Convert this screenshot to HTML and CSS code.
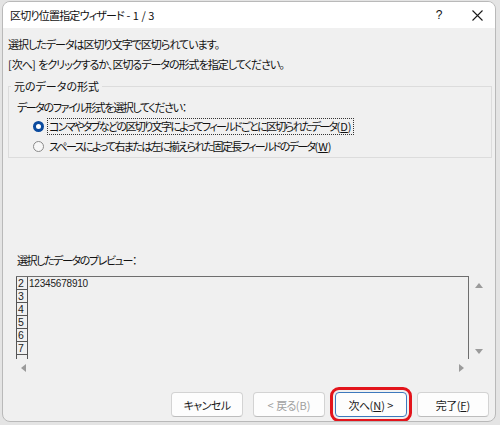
FILE: index.html
```html
<!DOCTYPE html>
<html lang="ja">
<head>
<meta charset="utf-8">
<title>区切り位置指定ウィザード</title>
<link rel="stylesheet" href="styles.css">
</head>
<body>
<div class="dialog">
  <div class="titlebar">
    <span class="title">区切り位置指定ウィザード<span class="lat"> - 1 / 3</span></span>
    <span class="help">?</span>
    <span class="close"><svg width="11" height="11" viewBox="0 0 11 11"><path d="M0.5 0.5 L10.5 10.5 M10.5 0.5 L0.5 10.5" stroke="#1a1a1a" stroke-width="1.1" fill="none"/></svg></span>
  </div>
  <div class="body">
    <p class="line">選択したデータは区切り文字で区切られています。</p>
    <p class="line"><span class="lat">[</span>次へ<span class="lat">] </span>をクリックするか、区切るデータの形式を指定してください。</p>
    <fieldset class="group">
      <legend>元のデータの形式</legend>
      <div class="prompt">データのファイル形式を選択してください：</div>
      <div class="radio-row">
        <span class="radio on"></span>
        <span class="radio-label focus">コンマやタブなどの区切り文字によってフィールドごとに区切られたデータ<span class="lat">(<u>D</u>)</span></span>
      </div>
      <div class="radio-row">
        <span class="radio"></span>
        <span class="radio-label">スペースによって右または左に揃えられた固定長フィールドのデータ<span class="lat">(<u>W</u>)</span></span>
      </div>
    </fieldset>
    <div class="preview">
      <div class="preview-label">選択したデータのプレビュー：</div>
      <div class="preview-main">
        <div class="frame">
          <div class="rownums">
            <div class="cell">2</div>
            <div class="cell">3</div>
            <div class="cell">4</div>
            <div class="cell">5</div>
            <div class="cell">6</div>
            <div class="cell">7</div>
          </div>
          <div class="data">12345678910</div>
        </div>
        <div class="vscroll"><span class="tri up"></span><span class="tri down"></span></div>
      </div>
      <div class="hscroll"><span class="tri left"></span><span class="tri right"></span></div>
    </div>
    <div class="buttons">
      <button class="btn">キャンセル</button>
      <button class="btn disabled"><span class="lat">&lt; </span>戻る<span class="lat">(B)</span></button>
      <button class="btn default">次へ<span class="lat">(<u>N</u>) &gt;</span></button>
      <button class="btn">完了<span class="lat">(<u>F</u>)</span></button>
    </div>
  </div>
</div>
</body>
</html>
```

FILE: styles.css
```css
html, body {
  margin: 0;
  padding: 0;
}
body {
  width: 500px;
  height: 425px;
  overflow: hidden;
  background: #e4e4e4;
  font-family: "Noto Sans CJK JP", "Noto Sans", sans-serif;
  font-feature-settings: "palt";
  color: #111;
}
.lat {
  letter-spacing: 0;
}
.dialog {
  box-sizing: border-box;
  margin: 1px 0 0 2px;
  width: 494px;
  height: 421px;
  border: 1px solid #b9b9b9;
  border-radius: 8px;
  overflow: hidden;
  background: #f0f0f0;
  display: flex;
  flex-direction: column;
}
.titlebar {
  height: 26px;
  flex: none;
  background: #fff;
  display: flex;
  align-items: center;
  padding-left: 7px;
  font-size: 11px;
}
.title {
  flex: 1;
  letter-spacing: -0.8px;
}
.help {
  width: 40px;
  text-align: center;
  font-family: "Liberation Sans", sans-serif;
  font-size: 12px;
}
.close {
  width: 36px;
  display: flex;
  justify-content: center;
}
.body {
  flex: 1;
  padding: 6px 3px 0 5px;
  font-size: 11px;
}
.line {
  margin: 0;
  line-height: 20px;
  letter-spacing: -1px;
}
.group {
  margin: 4px 0 0;
  padding: 0 0 1px 2px;
  border: 1px solid #dcdcdc;
}
.group legend {
  padding: 0 3px;
  line-height: 16px;
}
.prompt {
  margin-top: 4px;
  padding-left: 6px;
  line-height: 18px;
  letter-spacing: -1.4px;
}
.radio-row {
  display: flex;
  align-items: center;
  height: 20px;
  padding-left: 22px;
}
.radio {
  box-sizing: border-box;
  width: 11px;
  height: 11px;
  border-radius: 50%;
  border: 1px solid #8a8a8a;
  background: #f7f7f7;
  margin-right: 4px;
}
.radio.on {
  border: 3px solid #0a4a9e;
  background: #fff;
}
.radio-label {
  padding: 0 1px;
  line-height: 15px;
  letter-spacing: -1.65px;
}
.radio-label.focus {
  outline: 1px dotted #333;
}
.preview {
  margin-top: 92px;
  padding-left: 8px;
}
.preview-label {
  line-height: 20px;
  padding-left: 1px;
  letter-spacing: -1.4px;
}
.preview-main {
  margin-top: 6px;
  display: flex;
}
.frame {
  box-sizing: border-box;
  width: 453px;
  height: 83px;
  border-top: 1px solid #6e6e6e;
  border-right: 1px solid #6e6e6e;
  display: flex;
  align-items: flex-start;
}
.rownums {
  box-sizing: border-box;
  width: 12px;
  height: 82px;
  border-left: 1px solid #555;
  border-right: 1px solid #555;
}
.cell {
  box-sizing: border-box;
  height: 13px;
  border-bottom: 1px solid #555;
  font-family: "Liberation Sans", sans-serif;
  font-size: 10.5px;
  line-height: 12px;
  padding-left: 1px;
  color: #222;
}
.data {
  font-family: "Liberation Sans", sans-serif;
  font-size: 10px;
  line-height: 13px;
  padding-left: 1px;
  letter-spacing: -0.2px;
  color: #222;
}
.vscroll {
  width: 19px;
  height: 83px;
  display: flex;
  flex-direction: column;
  align-items: center;
  justify-content: space-between;
  padding: 7px 0 5px;
  box-sizing: border-box;
}
.hscroll {
  width: 453px;
  height: 18px;
  box-sizing: border-box;
  padding: 0 5px;
  display: flex;
  align-items: center;
  justify-content: space-between;
}
.tri {
  width: 0;
  height: 0;
  display: block;
}
.tri.up {
  border-left: 4px solid transparent;
  border-right: 4px solid transparent;
  border-bottom: 5px solid #9b9b9b;
}
.tri.down {
  border-left: 4px solid transparent;
  border-right: 4px solid transparent;
  border-top: 5px solid #9b9b9b;
}
.tri.left {
  border-top: 4px solid transparent;
  border-bottom: 4px solid transparent;
  border-right: 5px solid #9b9b9b;
}
.tri.right {
  border-top: 4px solid transparent;
  border-bottom: 4px solid transparent;
  border-left: 5px solid #9b9b9b;
}
.buttons {
  margin-top: 15px;
  margin-right: 3px;
  display: flex;
  justify-content: flex-end;
  gap: 10px;
}
.btn {
  width: 72px;
  height: 25px;
  padding: 0;
  background: #fdfdfd;
  border: 1px solid #d3d3d3;
  border-bottom-color: #bdbdbd;
  border-radius: 4px;
  font-family: "Noto Sans CJK JP", "Noto Sans", sans-serif;
  font-feature-settings: "palt";
  font-size: 11px;
  letter-spacing: -0.6px;
  color: #1a1a1a;
}
.btn.disabled {
  color: #a0a0a0;
}
.btn.default {
  border: 1px solid #3d79bd;
  outline: 3px solid #e3141b;
  outline-offset: 2px;
}
```
